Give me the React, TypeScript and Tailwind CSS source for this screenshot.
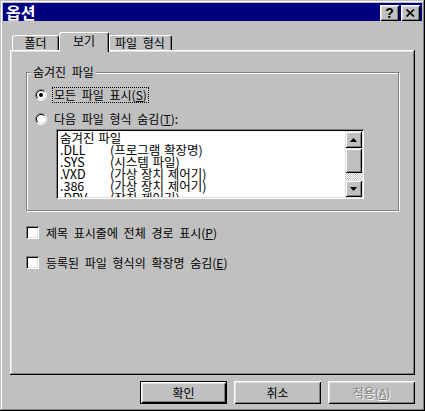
import React from "react";

const FONT = { fontFamily: '"Noto Sans CJK KR", "Noto Sans", sans-serif' };

function Radio({ checked }: { checked?: boolean }) {
  return (
    <svg width="12" height="12" viewBox="0 0 12 12" className="shrink-0">
      <circle cx="6" cy="6" r="5" fill="#fff" />
      <path d="M2.1 9.9 A5.5 5.5 0 0 1 9.9 2.1" stroke="#808080" fill="none" />
      <path d="M9.9 2.1 A5.5 5.5 0 0 1 2.1 9.9" stroke="#fff" fill="none" />
      <path d="M2.8 9.2 A4.5 4.5 0 0 1 9.2 2.8" stroke="#000" fill="none" />
      <path d="M9.2 2.8 A4.5 4.5 0 0 1 2.8 9.2" stroke="#dfdfdf" fill="none" />
      {checked && <circle cx="6" cy="6" r="2" fill="#000" />}
    </svg>
  );
}

function Checkbox() {
  return (
    <div className="w-[13px] h-[13px] shrink-0 bg-white shadow-[inset_1px_1px_0_#808080,inset_-1px_-1px_0_#fff,inset_2px_2px_0_#000,inset_-2px_-2px_0_#dfdfdf]" />
  );
}

function Btn({
  children,
  isDefault,
}: {
  children: React.ReactNode;
  isDefault?: boolean;
}) {
  return (
    <div
      className={
        "w-[87px] h-[23px] flex items-center justify-center text-[12px] leading-[12px] text-black " +
        (isDefault
          ? "border border-black shadow-[inset_1px_1px_0_#fff,inset_-1px_-1px_0_#000,inset_2px_2px_0_#dfdfdf,inset_-2px_-2px_0_#808080]"
          : "shadow-[inset_1px_1px_0_#fff,inset_-1px_-1px_0_#000,inset_2px_2px_0_#dfdfdf,inset_-2px_-2px_0_#808080]")
      }
      style={FONT}
    >
      {children}
    </div>
  );
}

function TitleBtn({ children }: { children: React.ReactNode }) {
  return (
    <div className="w-[19px] h-[16px] bg-[#c0c0c0] flex items-center justify-center shadow-[inset_1px_1px_0_#fff,inset_-1px_-1px_0_#000,inset_2px_2px_0_#dfdfdf,inset_-2px_-2px_0_#808080]">
      {children}
    </div>
  );
}

function Arrow({ up }: { up?: boolean }) {
  return (
    <svg width="7" height="4" viewBox="0 0 7 4">
      {up ? (
        <path d="M3.5 0 L7 4 L0 4 Z" fill="#000" />
      ) : (
        <path d="M0 0 L7 0 L3.5 4 Z" fill="#000" />
      )}
    </svg>
  );
}

const raised =
  "bg-[#c0c0c0] shadow-[inset_1px_1px_0_#dfdfdf,inset_-1px_-1px_0_#000,inset_2px_2px_0_#fff,inset_-2px_-2px_0_#808080]";

const rows: [string, string][] = [
  [".DLL", "(프로그램 확장명)"],
  [".SYS", "(시스템 파일)"],
  [".VXD", "(가상 장치 제어기)"],
  [".386", "(가상 장치 제어기)"],
  [".DRV", "(장치 제어기)"],
];

export default function App() {
  return (
    <div
      className="w-[425px] h-[411px] bg-[#c0c0c0] p-[3px] flex flex-col text-black text-[12px] [word-spacing:3px] shadow-[inset_-1px_-1px_0_#000,inset_1px_1px_0_#c0c0c0,inset_-2px_-2px_0_#808080,inset_2px_2px_0_#fff]"
      style={FONT}
    >
      {/* Title bar */}
      <div className="h-[18px] bg-[#000080] flex items-center justify-between pl-[3px] pr-[2px]">
        <span className="text-white font-bold text-[16px] leading-[18px]">옵션</span>
        <div className="flex gap-[2px] pt-[1px]">
          <TitleBtn>
            <span
              className="font-bold text-[14px] leading-[14px] text-black"
              style={{ fontFamily: '"Liberation Sans", Arial, sans-serif' }}
            >
              ?
            </span>
          </TitleBtn>
          <TitleBtn>
            <svg width="9" height="8" viewBox="0 0 9 8">
              <path d="M0.5 0.5 L8 7.5 M8 0.5 L0.5 7.5" stroke="#000" strokeWidth="1.6" />
            </svg>
          </TitleBtn>
        </div>
      </div>

      <div className="flex flex-col px-[7px] pt-[11px]">
        {/* Tabs */}
        <div className="h-[18px] flex items-end pl-[2px]">
          <div className="w-[47px] h-[15px] flex items-center justify-center border-t border-l border-r border-t-white border-l-white border-r-black rounded-t-[3px] shadow-[inset_-1px_0_0_#808080] leading-[12px]">
            폴더
          </div>
          <div className="relative z-10 w-[50px] h-[20px] -mb-[2px] bg-[#c0c0c0] flex items-start justify-center pt-[2px] border-t border-l border-r border-t-white border-l-white border-r-black rounded-t-[3px] shadow-[inset_-1px_0_0_#808080] leading-[12px]">
            보기
          </div>
          <div className="w-[63px] h-[15px] flex items-center justify-center border-t border-r border-t-white border-r-black rounded-tr-[3px] shadow-[inset_-1px_0_0_#808080,inset_1px_0_0_#fff] leading-[12px]">
            파일 형식
          </div>
        </div>

        {/* Panel */}
        <div className="h-[325px] px-[16px] pt-[22px] shadow-[inset_-1px_-1px_0_#000,inset_1px_1px_0_#fff,inset_-2px_-2px_0_#808080,inset_2px_2px_0_#dfdfdf]">
          {/* Group */}
          <div className="relative h-[139px] border border-[#808080] shadow-[1px_1px_0_#fff,inset_1px_1px_0_#fff] pl-[8px] pt-[14px]">
            <span className="absolute left-[4px] -top-[8px] px-[2px] bg-[#c0c0c0] leading-[14px]">
              숨겨진 파일
            </span>
            <div className="flex items-center h-[16px]">
              <Radio checked />
              <span className="ml-[5px] h-[16px] flex items-center px-[1px] border border-dotted border-black leading-[12px]">
                모든 파일 표시(<span className="underline">S</span>)
              </span>
            </div>
            <div className="flex items-center h-[16px] mt-[8px]">
              <Radio />
              <span className="ml-[5px] h-[16px] flex items-center px-[1px] border border-transparent leading-[12px]">
                다음 파일 형식 숨김(<span className="underline">T</span>):
              </span>
            </div>
            <div className="mt-[2px] ml-[21px] w-[308px] h-[70px] bg-white flex p-[2px] shadow-[inset_1px_1px_0_#808080,inset_-1px_-1px_0_#fff,inset_2px_2px_0_#000,inset_-2px_-2px_0_#dfdfdf]">
              <div className="flex-1 overflow-hidden pl-[2px] pt-[1px] leading-[12px] text-[12.5px] [word-spacing:1px]">
                <div>숨겨진 파일</div>
                {rows.map(([a, b]) => (
                  <div key={a} className="flex">
                    <span className="w-[50px] shrink-0">{a}</span>
                    <span>{b}</span>
                  </div>
                ))}
              </div>
              <div className="w-[17px] flex flex-col">
                <div className={"h-[17px] flex items-center justify-center " + raised}>
                  <Arrow up />
                </div>
                <div className={"h-[25px] " + raised} />
                <div className="flex-1 bg-[image:repeating-conic-gradient(#c0c0c0_0_25%,#fff_0_50%)] bg-[length:2px_2px]" />
                <div className={"h-[17px] flex items-center justify-center " + raised}>
                  <Arrow />
                </div>
              </div>
            </div>
          </div>

          {/* Checkboxes */}
          <div className="flex items-center h-[13px] mt-[15px]">
            <Checkbox />
            <span className="ml-[7px] leading-[12px]">
              제목 표시줄에 전체 경로 표시(<span className="underline">P</span>)
            </span>
          </div>
          <div className="flex items-center h-[13px] mt-[17px]">
            <Checkbox />
            <span className="ml-[7px] leading-[12px]">
              등록된 파일 형식의 확장명 숨김(<span className="underline">E</span>)
            </span>
          </div>
        </div>

        {/* Buttons */}
        <div className="flex justify-end gap-[7px] mt-[6px]">
          <Btn isDefault>확인</Btn>
          <Btn>취소</Btn>
          <Btn>
            <span className="text-[#808080] [text-shadow:1px_1px_0_#fff]">
              적용(<span className="underline">A</span>)
            </span>
          </Btn>
        </div>
      </div>
    </div>
  );
}
